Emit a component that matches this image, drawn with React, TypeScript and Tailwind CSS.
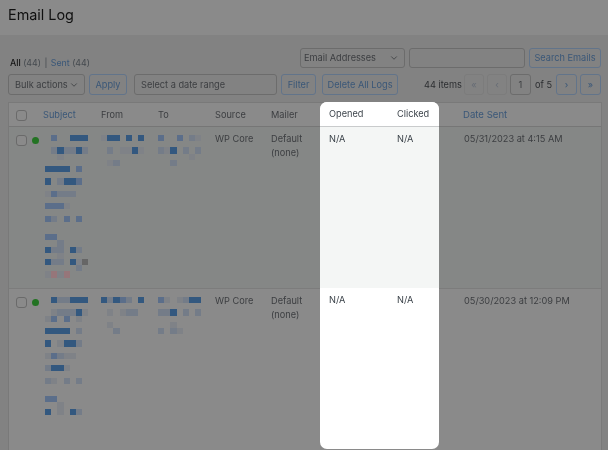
import React from "react";
import { ChevronDown } from "lucide-react";

// one letter = one 6.2px block of the pixelated text, "." = nothing
const blockColors: Record<string, string> = {
    D: "#33587f",
    M: "#5b6e8a",
    L: "#747c88",
    F: "#7f8287",
    G: "#666666",
    R: "#96767a",
};

const Pixelated = ({ rows }: { rows: string[] }) => {
    const size = 6.2;
    return (
        <svg
            width={7 * size}
            height={rows.length * size}
            shapeRendering="crispEdges"
            className="block"
        >
            {rows.map((row, y) =>
                row.split("").map((c, x) =>
                    c === "." ? null : (
                        <rect
                            key={`${x}-${y}`}
                            x={x * size}
                            y={y * size}
                            width={size}
                            height={size}
                            fill={blockColors[c]}
                        />
                    )
                )
            )}
        </svg>
    );
};

const subject1 = [
    ".M..DDD", ".......", ".LDLLDL", "..F....", ".......", "DDDD.M.", ".......", "D.LDDM.", ".......",
    "FMLLL..", ".......", "MMMF...", ".......", "ML.M.M.", ".......", ".......", "MM.....", "..L....",
    "DLL.DL.", "..F....", "DLL.DFG", ".....L.", "FRFR...",
];
const from1 = ["FDD.D.D", ".......", ".L.FFDF", ".......", ".FL...."];
const to1 = ["M..M.LF", ".......", "LFD.L.L", ".....F.", "..L...."];
const subject2 = [
    ".DLLDDD", ".......", ".FLLLDF", "FM.M.F.", ".......", "DDDD.L.", ".......", "D.FDDL.", ".......",
    "FMLFF..", ".......", "LDDF...", ".......", "LF.L.L.", ".......", ".......", "MM.....", "..F....",
    "D.F.DL.",
];
const from2 = ["DLDML.D", ".......", ".F.FLL.", ".......", ".F.....", "..L...."];
const to2 = ["MF.FLDD", ".......", "LLD.L.L", ".......", "..F....", "L.LF..."];

const Outline = ({ className, children }: { className: string; children: React.ReactNode }) => (
    <div className={`flex items-center justify-center rounded-[3px] border border-[#62748a] text-[#3a5778] ${className}`}>
        {children}
    </div>
);

const GrayBox = ({ className, children }: { className: string; children?: React.ReactNode }) => (
    <div className={`flex items-center rounded-[3px] border border-[#6c6c6c] text-[#3c3e41] ${className}`}>
        {children}
    </div>
);

const Check = () => <div className="w-[11px] h-[11px] mt-px ml-px rounded-[3px] border-[1.5px] border-[#6a6a6a] bg-[#8a8a8a]" />;

const leftCols = "grid grid-cols-[34px_58px_57px_57px_56px_1fr]";

const Row = ({ subject, from, to, striped }: { subject: string[]; from: string[]; to: string[]; striped?: boolean }) => (
    <div className={`${leftCols} pt-[5px] text-[#3c3e41] ${striped ? "h-[162px] bg-[#858786] border-b border-[#7c7c7c]" : "h-[170px]"}`}>
        <div className="flex items-start gap-[5px] pl-[6px] pt-[2px]">
            <Check />
            <div className="w-[7px] h-[7px] mt-[3px] rounded-full bg-[#237323]" />
        </div>
        <div className="pl-[2px] pt-[3px]"><Pixelated rows={subject} /></div>
        <div className="pt-[3px]"><Pixelated rows={from} /></div>
        <div className="pt-[3px]"><Pixelated rows={to} /></div>
        <div>WP Core</div>
        <div className="leading-[14px]">Default<br />(none)</div>
    </div>
);

const App = () => {
    return (
        <div className="w-[608px] h-[450px] overflow-hidden bg-[#828282] text-[9.2px] leading-[14px] whitespace-nowrap font-['Inter','Liberation_Sans',sans-serif] blur-[0.3px]">
            <div className="h-[35px] bg-[#8a8a8a] pl-[8px] pt-[5px] text-[14.4px] leading-[20px] text-[#101010]">Email Log</div>

            <div className="h-[33px] flex items-end pl-[10px] pr-[7px]">
                <div className="-mb-[2px] text-[8.8px] text-[#44494e]">
                    <span className="text-[#141414] font-medium">All</span> (44) <span className="mx-[1px]">|</span> <span className="text-[#3a5778]">Sent</span> (44)
                </div>
                <div className="ml-auto flex gap-[4px]">
                    <GrayBox className="w-[105px] h-[20px] pl-[3px] pr-[5px] justify-between text-[#2c2e31]">
                        Email Addresses
                        <ChevronDown size={10} strokeWidth={2} />
                    </GrayBox>
                    <GrayBox className="w-[116px] h-[20px]" />
                    <Outline className="w-[72px] h-[20px]">Search Emails</Outline>
                </div>
            </div>

            <div className="h-[21px] mt-[6px] flex items-center pl-[8px] pr-[7px]">
                <GrayBox className="w-[77px] h-[21px] pl-[6px] pr-[5px] justify-between text-[#2c2e31]">
                    Bulk actions
                    <ChevronDown size={10} strokeWidth={2} />
                </GrayBox>
                <Outline className="w-[38px] h-[21px] ml-[4px]">Apply</Outline>
                <GrayBox className="w-[143px] h-[21px] ml-[7px] pl-[6px]">Select a date range</GrayBox>
                <Outline className="w-[35px] h-[21px] ml-[4px]">Filter</Outline>
                <Outline className="w-[76px] h-[21px] ml-[6px]">Delete All Logs</Outline>
                <div className="ml-[26px] text-[#2c2e31]">44 items</div>
                <div className="ml-auto flex items-center gap-[3px]">
                    <div className="w-[20px] h-[21px] flex items-center justify-center rounded-[3px] border border-[#7c7c7c] text-[#666c75]">«</div>
                    <div className="w-[20px] h-[21px] flex items-center justify-center rounded-[3px] border border-[#7c7c7c] text-[#666c75]">‹</div>
                    <GrayBox className="w-[21px] h-[21px] justify-center">1</GrayBox>
                    <div className="mx-[1px] text-[#2c2e31]">of 5</div>
                    <Outline className="w-[21px] h-[21px]">›</Outline>
                    <Outline className="w-[21px] h-[21px]">»</Outline>
                </div>
            </div>

            <div className="mt-[7px] ml-[8px] w-[594px] flex border border-[#797979] border-b-0 bg-[#8a8a8a] h-[360px]">
                <div className="w-[311px]">
                    <div className={`${leftCols} h-[24px] items-center border-b border-[#767676] text-[#3c3e41]`}>
                        <div className="pl-[6px]"><Check /></div>
                        <div className="text-[#3a5778]">Subject</div>
                        <div>From</div>
                        <div>To</div>
                        <div>Source</div>
                        <div>Mailer</div>
                    </div>
                    <Row subject={subject1} from={from1} to={to1} striped />
                    <Row subject={subject2} from={from2} to={to2} />
                </div>

                <div className="w-[119px] h-[347px] -mt-px rounded-[7px] overflow-hidden bg-white text-[#3c434a]">
                    <div className="h-[25px] grid grid-cols-[68px_1fr] items-end pb-[5px] pl-[9px] border-b border-[#c9cbcc] bg-white">
                        <div>Opened</div>
                        <div>Clicked</div>
                    </div>
                    <div className="h-[161px] grid grid-cols-[68px_1fr] pt-[5px] pl-[9px] bg-[#f4f6f5]">
                        <div>N/A</div>
                        <div>N/A</div>
                    </div>
                    <div className="grid grid-cols-[68px_1fr] pt-[5px] pl-[9px]">
                        <div>N/A</div>
                        <div>N/A</div>
                    </div>
                </div>

                <div className="flex-1">
                    <div className="h-[24px] flex items-center pl-[24px] border-b border-[#767676] text-[#3a5778] text-[9.6px]">Date Sent</div>
                    <div className="h-[162px] pl-[25px] pt-[5px] bg-[#858786] border-b border-[#7c7c7c] text-[#3c3e41]">05/31/2023 at 4:15 AM</div>
                    <div className="pl-[25px] pt-[5px] text-[#3c3e41]">05/30/2023 at 12:09 PM</div>
                </div>
            </div>
        </div>
    );
};

export default App;
